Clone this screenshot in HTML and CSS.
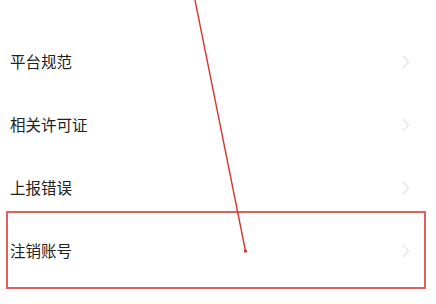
FILE: index.html
```html
<!DOCTYPE html>
<html lang="zh-CN">
<head>
<meta charset="utf-8">
<link rel="stylesheet" href="styles.css">
</head>
<body>
<div class="page">
  <ul class="menu">
    <li class="row"><span class="label">平台规范</span><svg class="chev" viewBox="0 0 8 14"><path d="M1.5 1.5 L6.5 7 L1.5 12.5"/></svg></li>
    <li class="row"><span class="label">相关许可证</span><svg class="chev" viewBox="0 0 8 14"><path d="M1.5 1.5 L6.5 7 L1.5 12.5"/></svg></li>
    <li class="row"><span class="label">上报错误</span><svg class="chev" viewBox="0 0 8 14"><path d="M1.5 1.5 L6.5 7 L1.5 12.5"/></svg></li>
    <li class="row"><span class="label">注销账号</span><svg class="chev" viewBox="0 0 8 14"><path d="M1.5 1.5 L6.5 7 L1.5 12.5"/></svg></li>
  </ul>
  <div class="highlight"></div>
  <svg class="arrow" viewBox="0 0 436 304" width="436" height="304">
    <line x1="195" y1="0" x2="245.5" y2="251" />
    <circle cx="245.5" cy="251" r="1.7" />
  </svg>
</div>
</body>
</html>
```

FILE: styles.css
```css
html, body {
  margin: 0;
  padding: 0;
  background: #ffffff;
}
.page {
  position: relative;
  width: 436px;
  height: 304px;
  overflow: hidden;
  background: #ffffff;
  font-family: "Noto Sans CJK SC", "Noto Sans", sans-serif;
}
.menu {
  list-style: none;
  margin: 0;
  padding: 30px 0 0 0;
  display: flex;
  flex-direction: column;
}
.row {
  height: 63px;
  display: flex;
  align-items: center;
  justify-content: space-between;
  padding: 0 26px 0 10px;
}
.label {
  font-size: 15.5px;
  font-weight: 400;
  color: #222222;
  line-height: 1;
}
.chev {
  width: 8px;
  height: 14px;
  fill: none;
  stroke: #e8e8e8;
  stroke-width: 1.6;
  stroke-linecap: round;
  stroke-linejoin: round;
}
.highlight {
  position: absolute;
  left: 6px;
  top: 211px;
  width: 416px;
  height: 74px;
  border: 2px solid #e2605a;
}
.arrow {
  position: absolute;
  left: 0;
  top: 0;
}
.arrow line {
  stroke: #d8362f;
  stroke-width: 1.4;
}
.arrow circle {
  fill: #d8362f;
}
```
